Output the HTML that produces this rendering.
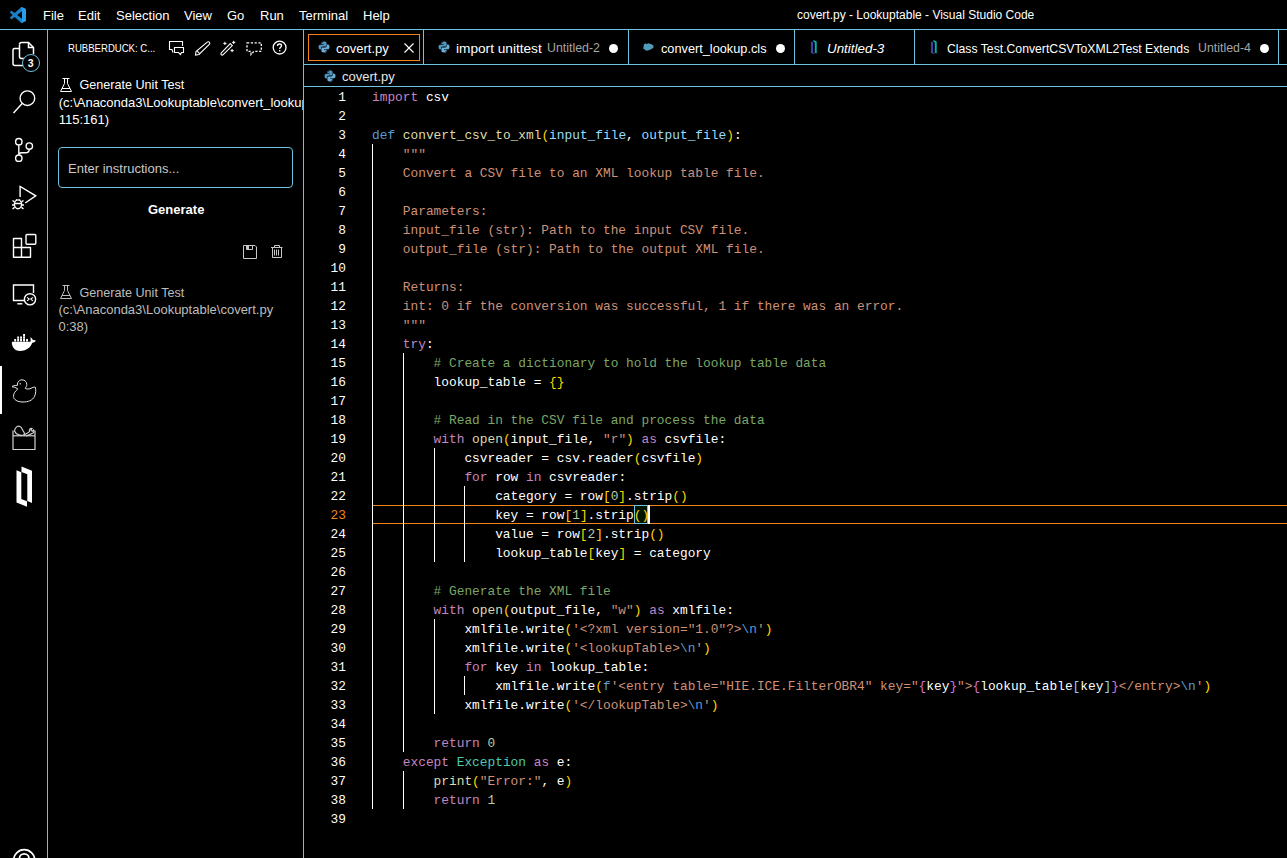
<!DOCTYPE html><html><head><meta charset="utf-8"><style>
*{margin:0;padding:0;box-sizing:border-box}
html,body{width:1287px;height:858px;overflow:hidden;background:#000}
body{position:relative;font-family:"Liberation Sans",sans-serif}
.t{position:absolute;white-space:pre}
.r{position:absolute}
svg{position:absolute;overflow:visible}
.ln{left:303px;width:43px;text-align:right;font-family:"Liberation Mono",monospace;font-size:12.83px;line-height:19px;padding-top:0px}
.code{left:372px;font-family:"Liberation Mono",monospace;font-size:12.83px;line-height:19px}
</style></head><body><div class="r" style="left:0px;top:29px;width:1287px;height:1px;background:#6FC3DF"></div>
<div class="r" style="left:47px;top:30px;width:1px;height:828px;background:#6FC3DF"></div>
<div class="r" style="left:303px;top:30px;width:1px;height:828px;background:#6FC3DF"></div>
<div class="r" style="left:304px;top:64px;width:983px;height:1px;background:#6FC3DF"></div>
<div class="r" style="left:304px;top:86px;width:983px;height:1px;background:#6FC3DF"></div>
<div class="r" style="left:423px;top:30px;width:1px;height:34px;background:#6FC3DF"></div>
<div class="r" style="left:628px;top:30px;width:1px;height:34px;background:#6FC3DF"></div>
<div class="r" style="left:794px;top:30px;width:1px;height:34px;background:#6FC3DF"></div>
<div class="r" style="left:914px;top:30px;width:1px;height:34px;background:#6FC3DF"></div>
<div class="r" style="left:1278px;top:30px;width:1px;height:34px;background:#6FC3DF"></div>
<svg style="left:10px;top:7px" width="16" height="16" viewBox="0 0 100 100">
<path fill="#1B7FC7" fill-rule="evenodd" d="M70.9 99.3C72.5 99.9 74.3 99.9 75.8 99.2L96.4 89.3C98.5 88.3 99.9 86.1 99.9 83.8V16.2C99.9 13.9 98.5 11.7 96.4 10.7L75.8 0.8C73.7 -0.2 71.3 0 69.5 1.4C69.2 1.6 69 1.8 68.8 2.1L29.3 38.1L12.1 25.1C10.5 23.9 8.3 24 6.8 25.3L1.3 30.3C-0.5 32 -0.5 34.8 1.3 36.5L16.2 50L1.3 63.6C-0.5 65.2 -0.5 68.1 1.3 69.7L6.8 74.7C8.3 76.1 10.5 76.2 12.1 75L29.3 61.9L68.8 97.9C69.4 98.5 70.1 99 70.9 99.3ZM75 27.3L45.1 50L75 72.7V27.3Z"/>
<path fill="#2A9BEA" d="M75.8 0.8L96.4 10.7C98.5 11.7 99.9 13.9 99.9 16.2V83.8C99.9 86.1 98.5 88.3 96.4 89.3L75.8 99.2C74 100 72 100 70.9 99.3L75 72.7V27.3L70 1Z"/>
</svg>
<div class="t" style="left:43px;top:8.70px;font-size:13px;line-height:13px;color:#fff;font-weight:400;font-family:'Liberation Sans', sans-serif;">File</div>
<div class="t" style="left:78px;top:8.70px;font-size:13px;line-height:13px;color:#fff;font-weight:400;font-family:'Liberation Sans', sans-serif;">Edit</div>
<div class="t" style="left:116px;top:8.70px;font-size:13px;line-height:13px;color:#fff;font-weight:400;font-family:'Liberation Sans', sans-serif;">Selection</div>
<div class="t" style="left:184px;top:8.70px;font-size:13px;line-height:13px;color:#fff;font-weight:400;font-family:'Liberation Sans', sans-serif;">View</div>
<div class="t" style="left:227px;top:8.70px;font-size:13px;line-height:13px;color:#fff;font-weight:400;font-family:'Liberation Sans', sans-serif;">Go</div>
<div class="t" style="left:260px;top:8.70px;font-size:13px;line-height:13px;color:#fff;font-weight:400;font-family:'Liberation Sans', sans-serif;">Run</div>
<div class="t" style="left:299px;top:8.70px;font-size:13px;line-height:13px;color:#fff;font-weight:400;font-family:'Liberation Sans', sans-serif;">Terminal</div>
<div class="t" style="left:363px;top:8.70px;font-size:13px;line-height:13px;color:#fff;font-weight:400;font-family:'Liberation Sans', sans-serif;">Help</div>
<div class="t" style="left:797px;top:9.34px;font-size:12px;line-height:12px;color:#fff;font-weight:400;font-family:'Liberation Sans', sans-serif;">covert.py - Lookuptable - Visual Studio Code</div>
<div class="r" style="left:372px;top:505px;width:915px;height:1px;background:#F38518"></div>
<div class="r" style="left:372px;top:523px;width:915px;height:1px;background:#F38518"></div>
<div class="r" style="left:634px;top:505px;width:14px;height:19px;border:1px solid #6FC3DF;background:#001400"></div>
<div class="r" style="left:372px;top:144px;width:1px;height:665px;background:#FFFFFF"></div>
<div class="r" style="left:403px;top:353px;width:1px;height:399px;background:#FFFFFF"></div>
<div class="r" style="left:403px;top:771px;width:1px;height:38px;background:#FFFFFF"></div>
<div class="r" style="left:434px;top:448px;width:1px;height:114px;background:#FFFFFF"></div>
<div class="r" style="left:434px;top:619px;width:1px;height:95px;background:#FFFFFF"></div>
<div class="r" style="left:464px;top:486px;width:1px;height:76px;background:#FFFFFF"></div>
<div class="r" style="left:464px;top:676px;width:1px;height:19px;background:#FFFFFF"></div>
<div class="t ln" style="top:88px;color:#FFFFFF">1</div>
<div class="t ln" style="top:107px;color:#FFFFFF">2</div>
<div class="t ln" style="top:126px;color:#FFFFFF">3</div>
<div class="t ln" style="top:145px;color:#FFFFFF">4</div>
<div class="t ln" style="top:164px;color:#FFFFFF">5</div>
<div class="t ln" style="top:183px;color:#FFFFFF">6</div>
<div class="t ln" style="top:202px;color:#FFFFFF">7</div>
<div class="t ln" style="top:221px;color:#FFFFFF">8</div>
<div class="t ln" style="top:240px;color:#FFFFFF">9</div>
<div class="t ln" style="top:259px;color:#FFFFFF">10</div>
<div class="t ln" style="top:278px;color:#FFFFFF">11</div>
<div class="t ln" style="top:297px;color:#FFFFFF">12</div>
<div class="t ln" style="top:316px;color:#FFFFFF">13</div>
<div class="t ln" style="top:335px;color:#FFFFFF">14</div>
<div class="t ln" style="top:354px;color:#FFFFFF">15</div>
<div class="t ln" style="top:373px;color:#FFFFFF">16</div>
<div class="t ln" style="top:392px;color:#FFFFFF">17</div>
<div class="t ln" style="top:411px;color:#FFFFFF">18</div>
<div class="t ln" style="top:430px;color:#FFFFFF">19</div>
<div class="t ln" style="top:449px;color:#FFFFFF">20</div>
<div class="t ln" style="top:468px;color:#FFFFFF">21</div>
<div class="t ln" style="top:487px;color:#FFFFFF">22</div>
<div class="t ln" style="top:506px;color:#F38518">23</div>
<div class="t ln" style="top:525px;color:#FFFFFF">24</div>
<div class="t ln" style="top:544px;color:#FFFFFF">25</div>
<div class="t ln" style="top:563px;color:#FFFFFF">26</div>
<div class="t ln" style="top:582px;color:#FFFFFF">27</div>
<div class="t ln" style="top:601px;color:#FFFFFF">28</div>
<div class="t ln" style="top:620px;color:#FFFFFF">29</div>
<div class="t ln" style="top:639px;color:#FFFFFF">30</div>
<div class="t ln" style="top:658px;color:#FFFFFF">31</div>
<div class="t ln" style="top:677px;color:#FFFFFF">32</div>
<div class="t ln" style="top:696px;color:#FFFFFF">33</div>
<div class="t ln" style="top:715px;color:#FFFFFF">34</div>
<div class="t ln" style="top:734px;color:#FFFFFF">35</div>
<div class="t ln" style="top:753px;color:#FFFFFF">36</div>
<div class="t ln" style="top:772px;color:#FFFFFF">37</div>
<div class="t ln" style="top:791px;color:#FFFFFF">38</div>
<div class="t ln" style="top:810px;color:#FFFFFF">39</div>
<div class="t code" style="top:88px"><span style="color:#C586C0">import</span><span style="color:#FFFFFF"> csv</span></div>
<div class="t code" style="top:126px"><span style="color:#569CD6">def</span><span style="color:#FFFFFF"> </span><span style="color:#DCDCAA">convert_csv_to_xml</span><span style="color:#FFD700">(</span><span style="color:#9CDCFE">input_file</span><span style="color:#FFFFFF">, </span><span style="color:#9CDCFE">output_file</span><span style="color:#FFD700">)</span><span style="color:#FFFFFF">:</span></div>
<div class="t code" style="top:145px"><span style="color:#CE9178">    &quot;&quot;&quot;</span></div>
<div class="t code" style="top:164px"><span style="color:#CE9178">    Convert a CSV file to an XML lookup table file.</span></div>
<div class="t code" style="top:202px"><span style="color:#CE9178">    Parameters:</span></div>
<div class="t code" style="top:221px"><span style="color:#CE9178">    input_file (str): Path to the input CSV file.</span></div>
<div class="t code" style="top:240px"><span style="color:#CE9178">    output_file (str): Path to the output XML file.</span></div>
<div class="t code" style="top:278px"><span style="color:#CE9178">    Returns:</span></div>
<div class="t code" style="top:297px"><span style="color:#CE9178">    int: 0 if the conversion was successful, 1 if there was an error.</span></div>
<div class="t code" style="top:316px"><span style="color:#CE9178">    &quot;&quot;&quot;</span></div>
<div class="t code" style="top:335px"><span style="color:#C586C0">    try</span><span style="color:#FFFFFF">:</span></div>
<div class="t code" style="top:354px"><span style="color:#7CA668">        # Create a dictionary to hold the lookup table data</span></div>
<div class="t code" style="top:373px"><span style="color:#FFFFFF">        lookup_table = </span><span style="color:#FFD700">{}</span></div>
<div class="t code" style="top:411px"><span style="color:#7CA668">        # Read in the CSV file and process the data</span></div>
<div class="t code" style="top:430px"><span style="color:#FFFFFF">        </span><span style="color:#C586C0">with</span><span style="color:#FFFFFF"> </span><span style="color:#DCDCAA">open</span><span style="color:#FFD700">(</span><span style="color:#FFFFFF">input_file, </span><span style="color:#CE9178">&quot;r&quot;</span><span style="color:#FFD700">)</span><span style="color:#FFFFFF"> </span><span style="color:#C586C0">as</span><span style="color:#FFFFFF"> csvfile:</span></div>
<div class="t code" style="top:449px"><span style="color:#FFFFFF">            csvreader = csv.reader</span><span style="color:#FFD700">(</span><span style="color:#FFFFFF">csvfile</span><span style="color:#FFD700">)</span></div>
<div class="t code" style="top:468px"><span style="color:#FFFFFF">            </span><span style="color:#C586C0">for</span><span style="color:#FFFFFF"> row </span><span style="color:#C586C0">in</span><span style="color:#FFFFFF"> csvreader:</span></div>
<div class="t code" style="top:487px"><span style="color:#FFFFFF">                category = row</span><span style="color:#FFD700">[</span><span style="color:#B5CEA8">0</span><span style="color:#FFD700">]</span><span style="color:#FFFFFF">.strip</span><span style="color:#FFD700">()</span></div>
<div class="t code" style="top:506px"><span style="color:#FFFFFF">                key = row</span><span style="color:#FFD700">[</span><span style="color:#B5CEA8">1</span><span style="color:#FFD700">]</span><span style="color:#FFFFFF">.strip</span><span style="color:#FFD700">()</span></div>
<div class="t code" style="top:525px"><span style="color:#FFFFFF">                value = row</span><span style="color:#FFD700">[</span><span style="color:#B5CEA8">2</span><span style="color:#FFD700">]</span><span style="color:#FFFFFF">.strip</span><span style="color:#FFD700">()</span></div>
<div class="t code" style="top:544px"><span style="color:#FFFFFF">                lookup_table</span><span style="color:#FFD700">[</span><span style="color:#FFFFFF">key</span><span style="color:#FFD700">]</span><span style="color:#FFFFFF"> = category</span></div>
<div class="t code" style="top:582px"><span style="color:#7CA668">        # Generate the XML file</span></div>
<div class="t code" style="top:601px"><span style="color:#FFFFFF">        </span><span style="color:#C586C0">with</span><span style="color:#FFFFFF"> </span><span style="color:#DCDCAA">open</span><span style="color:#FFD700">(</span><span style="color:#FFFFFF">output_file, </span><span style="color:#CE9178">&quot;w&quot;</span><span style="color:#FFD700">)</span><span style="color:#FFFFFF"> </span><span style="color:#C586C0">as</span><span style="color:#FFFFFF"> xmlfile:</span></div>
<div class="t code" style="top:620px"><span style="color:#FFFFFF">            xmlfile.write</span><span style="color:#FFD700">(</span><span style="color:#CE9178">&#x27;&lt;?xml version=&quot;1.0&quot;?&gt;</span><span style="color:#569CD6">\n</span><span style="color:#CE9178">&#x27;</span><span style="color:#FFD700">)</span></div>
<div class="t code" style="top:639px"><span style="color:#FFFFFF">            xmlfile.write</span><span style="color:#FFD700">(</span><span style="color:#CE9178">&#x27;&lt;lookupTable&gt;</span><span style="color:#569CD6">\n</span><span style="color:#CE9178">&#x27;</span><span style="color:#FFD700">)</span></div>
<div class="t code" style="top:658px"><span style="color:#FFFFFF">            </span><span style="color:#C586C0">for</span><span style="color:#FFFFFF"> key </span><span style="color:#C586C0">in</span><span style="color:#FFFFFF"> lookup_table:</span></div>
<div class="t code" style="top:677px"><span style="color:#FFFFFF">                xmlfile.write</span><span style="color:#FFD700">(</span><span style="color:#569CD6">f</span><span style="color:#CE9178">&#x27;&lt;entry table=&quot;HIE.ICE.FilterOBR4&quot; key=&quot;</span><span style="color:#DA70D6">{</span><span style="color:#FFFFFF">key</span><span style="color:#DA70D6">}</span><span style="color:#CE9178">&quot;&gt;</span><span style="color:#DA70D6">{</span><span style="color:#FFFFFF">lookup_table</span><span style="color:#87CEFA">[</span><span style="color:#FFFFFF">key</span><span style="color:#87CEFA">]</span><span style="color:#DA70D6">}</span><span style="color:#CE9178">&lt;/entry&gt;</span><span style="color:#569CD6">\n</span><span style="color:#CE9178">&#x27;</span><span style="color:#FFD700">)</span></div>
<div class="t code" style="top:696px"><span style="color:#FFFFFF">            xmlfile.write</span><span style="color:#FFD700">(</span><span style="color:#CE9178">&#x27;&lt;/lookupTable&gt;</span><span style="color:#569CD6">\n</span><span style="color:#CE9178">&#x27;</span><span style="color:#FFD700">)</span></div>
<div class="t code" style="top:734px"><span style="color:#FFFFFF">        </span><span style="color:#C586C0">return</span><span style="color:#FFFFFF"> </span><span style="color:#B5CEA8">0</span></div>
<div class="t code" style="top:753px"><span style="color:#FFFFFF">    </span><span style="color:#C586C0">except</span><span style="color:#FFFFFF"> </span><span style="color:#4EC9B0">Exception</span><span style="color:#FFFFFF"> </span><span style="color:#C586C0">as</span><span style="color:#FFFFFF"> e:</span></div>
<div class="t code" style="top:772px"><span style="color:#FFFFFF">        </span><span style="color:#DCDCAA">print</span><span style="color:#FFD700">(</span><span style="color:#CE9178">&quot;Error:&quot;</span><span style="color:#FFFFFF">, e</span><span style="color:#FFD700">)</span></div>
<div class="t code" style="top:791px"><span style="color:#FFFFFF">        </span><span style="color:#C586C0">return</span><span style="color:#FFFFFF"> </span><span style="color:#B5CEA8">1</span></div>
<div class="r" style="left:648px;top:505px;width:2px;height:19px;background:#FFFFFF"></div>
<div class="r" style="left:308px;top:34px;width:112px;height:27px;border:1px solid #F38518"></div>
<svg style="left:318px;top:41px" width="12" height="12" viewBox="0 0 24 24">
<path fill="#4E94C0" d="M11.8 1C7 1 6.9 3 6.9 3.6V6.4H12V7.3H4.6C2.5 7.3 1 9 1 12.1C1 15.2 2.4 16.9 4.4 16.9H6.2V14.3C6.2 12.6 7.6 11.1 9.3 11.1H14.6C16 11.1 17.2 9.9 17.2 8.4V3.8C17.2 2.4 16 1 11.8 1ZM9.2 2.6C9.8 2.6 10.2 3.1 10.2 3.6C10.2 4.2 9.8 4.6 9.2 4.6C8.7 4.6 8.2 4.2 8.2 3.6C8.2 3.1 8.7 2.6 9.2 2.6Z"/>
<path fill="#6AAED6" d="M12.2 23C17 23 17.1 21 17.1 20.4V17.6H12V16.7H19.4C21.5 16.7 23 15 23 11.9C23 8.8 21.6 7.1 19.6 7.1H17.8V9.7C17.8 11.4 16.4 12.9 14.7 12.9H9.4C8 12.9 6.8 14.1 6.8 15.6V20.2C6.8 21.6 8 23 12.2 23ZM14.8 21.4C14.2 21.4 13.8 20.9 13.8 20.4C13.8 19.8 14.2 19.4 14.8 19.4C15.3 19.4 15.8 19.8 15.8 20.4C15.8 20.9 15.3 21.4 14.8 21.4Z"/>
</svg>
<div class="t" style="left:336px;top:41.70px;font-size:13px;line-height:13px;color:#fff;font-weight:400;font-family:'Liberation Sans', sans-serif;">covert.py</div>
<svg style="left:404px;top:43px" width="10" height="10" viewBox="0 0 10 10"><path d="M0.5 0.5L9.5 9.5M9.5 0.5L0.5 9.5" stroke="#fff" stroke-width="1.2"/></svg>
<svg style="left:438px;top:41px" width="12" height="12" viewBox="0 0 24 24">
<path fill="#4E94C0" d="M11.8 1C7 1 6.9 3 6.9 3.6V6.4H12V7.3H4.6C2.5 7.3 1 9 1 12.1C1 15.2 2.4 16.9 4.4 16.9H6.2V14.3C6.2 12.6 7.6 11.1 9.3 11.1H14.6C16 11.1 17.2 9.9 17.2 8.4V3.8C17.2 2.4 16 1 11.8 1ZM9.2 2.6C9.8 2.6 10.2 3.1 10.2 3.6C10.2 4.2 9.8 4.6 9.2 4.6C8.7 4.6 8.2 4.2 8.2 3.6C8.2 3.1 8.7 2.6 9.2 2.6Z"/>
<path fill="#6AAED6" d="M12.2 23C17 23 17.1 21 17.1 20.4V17.6H12V16.7H19.4C21.5 16.7 23 15 23 11.9C23 8.8 21.6 7.1 19.6 7.1H17.8V9.7C17.8 11.4 16.4 12.9 14.7 12.9H9.4C8 12.9 6.8 14.1 6.8 15.6V20.2C6.8 21.6 8 23 12.2 23ZM14.8 21.4C14.2 21.4 13.8 20.9 13.8 20.4C13.8 19.8 14.2 19.4 14.8 19.4C15.3 19.4 15.8 19.8 15.8 20.4C15.8 20.9 15.3 21.4 14.8 21.4Z"/>
</svg>
<div class="t" style="left:456px;top:41.60px;font-size:13px;line-height:13px;color:#fff;font-weight:400;font-family:'Liberation Sans', sans-serif;transform:scaleX(1.05);transform-origin:0 0;">import unittest</div>
<div class="t" style="left:547px;top:42.44px;font-size:12px;line-height:12px;color:#A6A6A6;font-weight:400;font-family:'Liberation Sans', sans-serif;transform:scaleX(1.03);transform-origin:0 0;">Untitled-2</div>
<div class="r" style="left:609px;top:44px;width:9px;height:9px;border-radius:50%;background:#fff"></div>
<svg style="left:643px;top:43px" width="11" height="8" viewBox="0 0 11 8"><path d="M1 1.2L2.8 0.4L4 1L5.2 0.3L8.5 1.2L10.6 2.8L10.3 5L7.5 6.5L4.5 7.8L2.5 7.3L0.2 5.5Z" fill="#519ABA"/></svg>
<div class="t" style="left:661px;top:41.60px;font-size:13px;line-height:13px;color:#fff;font-weight:400;font-family:'Liberation Sans', sans-serif;transform:scaleX(0.98);transform-origin:0 0;">convert_lookup.cls</div>
<div class="r" style="left:776px;top:44px;width:9px;height:9px;border-radius:50%;background:#fff"></div>
<svg style="left:809px;top:39px" width="9" height="16" viewBox="0 0 9 16"><path d="M1.9 2.6L4 3V13.2L5.6 14.4V15.2L1.9 14Z" fill="#3E3EA8"/><path d="M4.2 0.9L7.7 2.4V14.6L5.8 13.8V3.4L4.2 2.5Z" fill="#00B4A8"/></svg>
<div class="t" style="left:827px;top:41.60px;font-size:13px;line-height:13px;color:#fff;font-weight:400;font-family:'Liberation Sans', sans-serif;font-style:italic;transform:scaleX(1.03);transform-origin:0 0;">Untitled-3</div>
<svg style="left:929px;top:39px" width="9" height="16" viewBox="0 0 9 16"><path d="M1.9 2.6L4 3V13.2L5.6 14.4V15.2L1.9 14Z" fill="#3E3EA8"/><path d="M4.2 0.9L7.7 2.4V14.6L5.8 13.8V3.4L4.2 2.5Z" fill="#00B4A8"/></svg>
<div class="t" style="left:947px;top:41.60px;font-size:13px;line-height:13px;color:#fff;font-weight:400;font-family:'Liberation Sans', sans-serif;transform:scaleX(0.94);transform-origin:0 0;">Class Test.ConvertCSVToXML2Test Extends</div>
<div class="t" style="left:1198px;top:42.44px;font-size:12px;line-height:12px;color:#A6A6A6;font-weight:400;font-family:'Liberation Sans', sans-serif;transform:scaleX(1.03);transform-origin:0 0;">Untitled-4</div>
<div class="r" style="left:1260px;top:44px;width:9px;height:9px;border-radius:50%;background:#fff"></div>
<svg style="left:324px;top:70px" width="12" height="12" viewBox="0 0 24 24">
<path fill="#4E94C0" d="M11.8 1C7 1 6.9 3 6.9 3.6V6.4H12V7.3H4.6C2.5 7.3 1 9 1 12.1C1 15.2 2.4 16.9 4.4 16.9H6.2V14.3C6.2 12.6 7.6 11.1 9.3 11.1H14.6C16 11.1 17.2 9.9 17.2 8.4V3.8C17.2 2.4 16 1 11.8 1ZM9.2 2.6C9.8 2.6 10.2 3.1 10.2 3.6C10.2 4.2 9.8 4.6 9.2 4.6C8.7 4.6 8.2 4.2 8.2 3.6C8.2 3.1 8.7 2.6 9.2 2.6Z"/>
<path fill="#6AAED6" d="M12.2 23C17 23 17.1 21 17.1 20.4V17.6H12V16.7H19.4C21.5 16.7 23 15 23 11.9C23 8.8 21.6 7.1 19.6 7.1H17.8V9.7C17.8 11.4 16.4 12.9 14.7 12.9H9.4C8 12.9 6.8 14.1 6.8 15.6V20.2C6.8 21.6 8 23 12.2 23ZM14.8 21.4C14.2 21.4 13.8 20.9 13.8 20.4C13.8 19.8 14.2 19.4 14.8 19.4C15.3 19.4 15.8 19.8 15.8 20.4C15.8 20.9 15.3 21.4 14.8 21.4Z"/>
</svg>
<div class="t" style="left:342px;top:69.70px;font-size:13px;line-height:13px;color:#E6E6E6;font-weight:400;font-family:'Liberation Sans', sans-serif;">covert.py</div>
<div class="t" style="left:68px;top:43.19px;font-size:11px;line-height:11px;color:#fff;font-weight:400;font-family:'Liberation Sans', sans-serif;transform:scaleX(0.87);transform-origin:0 0;">RUBBERDUCK: C...</div>
<svg style="left:160px;top:36px" width="140" height="28" viewBox="160 36 140 28" fill="none" stroke="#fff" stroke-width="1.1">
<path d="M182.5 46V41.5H169.5V49.5H172L173 52.5"/>
<path d="M174.5 47.5H183.5V52.5H181.5L180.5 54.5L178.5 52.5H174.5Z"/>
<path d="M207.2 42.2C207.8 41.6 208.8 41.6 209.3 42.2C209.9 42.8 209.9 43.7 209.3 44.3L199 54.5L195.5 55L196 51.5Z"/><path d="M197.2 51.2L199.6 53.6"/>
<path d="M230.3 43.6L232.3 45.6L223.2 54.7C222.6 55.3 221.8 55.2 221.3 54.7C220.8 54.2 220.7 53.4 221.3 52.8Z"/>
<path d="M224.9 41.8V45M223.3 43.4H226.5M233.7 40.8V44M232.1 42.4H235.3M232.1 49V52.2M230.5 50.6H233.7" stroke-width="1"/>
<path d="M247 42.8H261.3V51.3H254L251 54.5V51.3H247Z" stroke-dasharray="2.2 1.6" stroke-width="1.3"/>
<circle cx="279.6" cy="47.6" r="6.4" stroke-width="1.3"/>
<path d="M277.5 45.9C277.5 44.7 278.4 44 279.5 44C280.7 44 281.5 44.8 281.5 45.8C281.5 47.2 279.7 47.3 279.7 48.9" stroke-width="1.3"/>
<rect x="279" y="50" width="1.4" height="1.4" fill="#fff" stroke="none"/>
</svg>
<svg style="left:56px;top:76px" width="20" height="20" viewBox="56 76 20 20"><path d="M62.5 78.5H69.5M64.5 78.5V83.5L60.5 91.5H71.5L67.5 83.5V78.5M62 88.5H70" stroke="#fff" stroke-width="1" fill="none"/></svg>
<div class="t" style="left:79.5px;top:78.93px;font-size:12.6px;line-height:12.6px;color:#fff;font-weight:400;font-family:'Liberation Sans', sans-serif;">Generate Unit Test</div>
<div style="position:absolute;left:48px;top:90px;width:255px;height:40px;overflow:hidden">
<div class="t" style="left:10.700000000000003px;top:5.70px;font-size:13px;line-height:13px;color:#fff;font-weight:400;font-family:'Liberation Sans', sans-serif;">(c:\Anaconda3\Lookuptable\convert_lookup.cls</div>
<div class="t" style="left:10.700000000000003px;top:22.60px;font-size:13px;line-height:13px;color:#fff;font-weight:400;font-family:'Liberation Sans', sans-serif;">115:161)</div>
</div>
<div class="r" style="left:58px;top:147px;width:235px;height:41px;border:1px solid #6FC3DF;border-radius:4px"></div>
<div class="t" style="left:68px;top:162.00px;font-size:13px;line-height:13px;color:#C8C8C8;font-weight:400;font-family:'Liberation Sans', sans-serif;">Enter instructions...</div>
<div class="t" style="left:148px;top:202.80px;font-size:13px;line-height:13px;color:#fff;font-weight:700;font-family:'Liberation Sans', sans-serif;">Generate</div>
<svg style="left:240px;top:242px" width="46" height="20" viewBox="240 242 46 20" fill="none" stroke="#C8C8C8" stroke-width="1">
<path d="M243.5 245.5H255L256.5 247V258.5H243.5Z"/><path d="M246.5 245.5V249.5H252.5V245.5"/><rect x="247" y="246" width="2" height="3" fill="#C8C8C8" stroke="none"/>
<path d="M271 247.5H282.5M274.5 247.5V245.5H279.5V247.5M272.5 247.5V257.5H281.5V247.5M274.5 249.5V255.5M276.5 249.5V255.5M278.5 249.5V255.5"/>
</svg>
<svg style="left:56px;top:283px" width="20" height="20" viewBox="56 76 20 20"><path d="M62.5 78.5H69.5M64.5 78.5V83.5L60.5 91.5H71.5L67.5 83.5V78.5M62 88.5H70" stroke="#BDBDBD" stroke-width="1" fill="none"/></svg>
<div class="t" style="left:79.5px;top:286.93px;font-size:12.6px;line-height:12.6px;color:#BDBDBD;font-weight:400;font-family:'Liberation Sans', sans-serif;">Generate Unit Test</div>
<div class="t" style="left:58.5px;top:303.40px;font-size:13px;line-height:13px;color:#BDBDBD;font-weight:400;font-family:'Liberation Sans', sans-serif;">(c:\Anaconda3\Lookuptable\covert.py</div>
<div class="t" style="left:58.5px;top:320.20px;font-size:13px;line-height:13px;color:#BDBDBD;font-weight:400;font-family:'Liberation Sans', sans-serif;">0:38)</div>
<svg style="left:12px;top:41px" width="24" height="26" viewBox="0 0 24 26" fill="none" stroke="#fff" stroke-width="1.5">
<path d="M7.5 3.5V15.5C7.5 16.6 8.4 17.5 9.5 17.5H14"/><path d="M7.5 3.5C7.5 2.4 8.4 1.5 9.5 1.5H16.5L21.5 6.5V13"/><path d="M16.5 1.5V6.5H21.5"/><path d="M7.5 7.5H2.5C1.4 7.5 1 8.4 1 9.5V22.5C1 23.6 1.9 24.5 3 24.5H12"/></svg>
<div class="r" style="left:22px;top:54px;width:18px;height:18px;border-radius:50%;border:1px solid #6FC3DF;background:#000"></div>
<div class="t" style="left:27.8px;top:58.41px;font-size:10.5px;line-height:10.5px;color:#fff;font-weight:700;font-family:'Liberation Sans', sans-serif;">3</div>
<svg style="left:12px;top:89px" width="24" height="25" viewBox="0 0 24 25" fill="none" stroke="#fff" stroke-width="1.4">
<circle cx="15.4" cy="9.2" r="7.3"/><path d="M10.2 14.5L1.5 24"/></svg>
<svg style="left:12px;top:136px" width="24" height="26" viewBox="0 0 24 26" fill="none" stroke="#fff" stroke-width="1.4">
<circle cx="6.8" cy="5.7" r="3.2"/><circle cx="17.3" cy="10.1" r="3.2"/><circle cx="6.8" cy="22.2" r="3.2"/><path d="M6.8 8.9V19M17.3 13.3C17.3 15.5 15.8 16.8 13.5 16.8H9.5C8 16.8 6.8 17.5 6.8 19"/></svg>
<svg style="left:10px;top:184px" width="28" height="28" viewBox="0 0 28 28" fill="none" stroke="#fff" stroke-width="1.4">
<path d="M10.1 13V2.4L25.8 11.9L15.2 19"/>
<ellipse cx="8" cy="20.3" rx="3.6" ry="4.4"/><path d="M4.4 19.5H11.6M2.5 16.5L4.6 17.8M13.5 16.5L11.4 17.8M2 21H4.4M14 21H11.6M2.5 24.8L4.6 23.4M13.5 24.8L11.4 23.4M6 15.5L7 16.5M10 15.5L9 16.5"/></svg>
<svg style="left:11px;top:233px" width="27" height="26" viewBox="0 0 27 26" fill="none" stroke="#fff" stroke-width="1.4" stroke-linejoin="round">
<path d="M2.5 5.5H10.5V14.5H19.5V24.3H2.5Z"/><path d="M2.5 14.5H10.5V24.3"/><rect x="15" y="1.5" width="9.8" height="9.8" rx="1"/></svg>
<svg style="left:12px;top:284px" width="24" height="22" viewBox="0 0 24 22" fill="none" stroke="#fff" stroke-width="1.4">
<path d="M12.5 16.5H1.5V1H21.5V9"/><path d="M5.3 19.8H10.3"/><circle cx="18" cy="15.3" r="5.6"/><path d="M15.2 13.3L17.2 15.1L15.2 16.9M20.8 13.3L18.8 15.1L20.8 16.9" stroke-width="1.1"/></svg>
<svg style="left:8px;top:328px" width="32" height="28" viewBox="8 328 32 28">
<path fill="#fff" d="M11.8 341.8H30.4C30.8 340.8 30.6 339 30.4 337.2C31.6 337.8 32.6 339 32.9 340.2C33.9 339.8 35 340 35.8 340.6C35 342.2 33.8 342.8 32.3 342.8C30.5 348 25.5 351 20 351C14.5 351 11.8 347 11.8 341.8Z"/>
<path fill="#fff" d="M14.2 339.1h1.9v2.3h-1.9ZM17.2 339.1h1.9v2.3h-1.9ZM20.1 339.1h1.9v2.3h-1.9ZM23.1 339.1h1.9v2.3h-1.9ZM26.1 339.1h1.9v2.3h-1.9ZM17.2 336.5h1.9v2.2h-1.9ZM20.1 336.5h1.9v2.2h-1.9ZM23.1 336.5h1.9v2.2h-1.9ZM23.1 334h1.9v2.2h-1.9Z"/></svg>
<div class="r" style="left:0px;top:366px;width:2px;height:48px;background:#fff"></div>
<svg style="left:11px;top:378.8px" width="26" height="24" viewBox="0 0 26 24" fill="none" stroke="#E8E8E8" stroke-width="1">
<path d="M6.5 6.3C6 3 8.5 0.8 11 0.8C13.8 0.8 15.8 3 15.8 5.5C15.8 7 15 8.2 14.2 9.3C15.5 10.2 18 10.3 20 9.3C21.5 8.5 23 7.8 24.3 8.3C25 10.5 25 14.5 23.5 17.5C21.5 21.5 17 23 12 23C6 23 2.8 20.5 2.5 17.5C2.2 14.5 4.5 12 6.8 10C5.5 9.2 4.5 8.5 3.5 8.2L1 7.8C1.5 7 3 6.4 6.5 6.3Z"/>
<circle cx="9.2" cy="4.8" r="0.7" fill="#E8E8E8" stroke="none"/></svg>
<svg style="left:12px;top:425px" width="24" height="26" viewBox="0 0 24 26" fill="none" stroke="#D0D0D0" stroke-width="1.2">
<path d="M1 5.5V24.5H23V5.5"/><path d="M1 10.8H23"/><path d="M2.5 6C3 2 6 0.5 8 1.5C10 2.5 10.5 5 11.5 6.5C12.5 8 13 9 11.5 10C9 11 4 10 2.5 6Z"/><path d="M12 10.5C14 8 16 8.5 17.5 6.5C17 4.5 18 3 20 3.5L19 5.2L20.3 6.2L21.7 5C22.5 6.5 21.5 8.5 19.8 8.5C18 10 16 10.5 14 10.8"/></svg>
<svg style="left:16px;top:466px" width="17" height="41" viewBox="0 0 17 41">
<path fill="#fff" d="M0.5 4.3L5.3 6.3V33L11 35.2V40.8L0.5 36.4Z"/><path fill="#fff" d="M5.5 0.5L16 4.8V37L11.3 35V8.2L5.5 5.9Z"/></svg>
<svg style="left:12px;top:848px" width="24" height="24" viewBox="0 0 24 24" fill="none" stroke="#fff" stroke-width="1.4">
<circle cx="12.2" cy="12.3" r="10.6" stroke-width="1.7"/><circle cx="12.2" cy="10.6" r="4.8" stroke-width="1.7"/></svg></body></html>
